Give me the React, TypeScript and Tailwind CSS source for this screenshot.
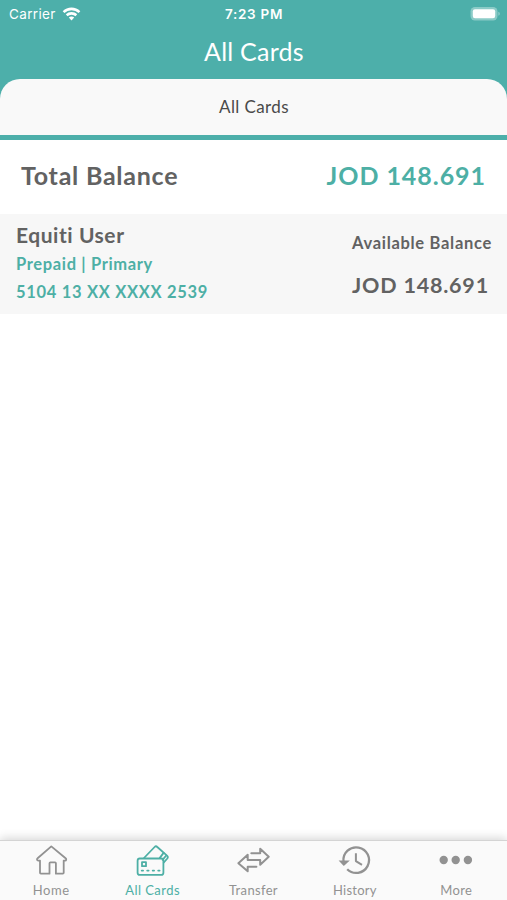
import type { ReactNode } from "react";

interface Card {
  holder: string;
  kind: string;
  number: string;
  balance: string;
}

interface Tab {
  label: string;
  icon: ReactNode;
  labelClass: string;
  active?: boolean;
}

const cards: Card[] = [
  {
    holder: "Equiti User",
    kind: "Prepaid | Primary",
    number: "5104 13 XX XXXX 2539",
    balance: "JOD 148.691",
  },
];

const iconProps = {
  width: 36,
  height: 36,
  viewBox: "0 0 36 36",
  fill: "none",
  stroke: "currentColor",
  strokeWidth: 1.8,
  strokeLinejoin: "round",
  strokeLinecap: "round",
} as const;

function HomeIcon() {
  return (
    <svg {...iconProps}>
      <path d="M18.3 3.4 32.6 15.3c1.1.9.7 2.3-.5 2.3h-1.4v12.2c0 .6-.3.9-.9.9h-6.9V20.3c0-.6-.3-.9-.9-.9h-4.6c-.6 0-.9.3-.9.9v10.4H7.9c-.6 0-.9-.3-.9-.9V17.6H5.2c-1.2 0-1.700-1.400-.6-2.300L18.3 3.4Z" />
    </svg>
  );
}

function CardsIcon() {
  return (
    <svg {...iconProps} strokeWidth={1.8}>
      <rect x="3.6" y="15.5" width="25.8" height="16.4" rx="2.2" />
      <path d="m10 15 10.6-11c.9-.9 1.8-.9 2.7 0l9.7 8.6c1 .9 1.1 1.9.3 2.9l-3.5 4" />
      <path d="m25.8 14.9 3.8-5M28.6 16.8l3.6-4.3" />
      <path d="M8 19.2h4v4H8zM7.7 27.6h1.400M13.2 27.6h1.4M18.7 27.6h1.4M24.2 27.6h1.4" />
    </svg>
  );
}

function TransferIcon() {
  return (
    <svg {...iconProps} strokeWidth={2}>
      <path d="M16.3 10.3h8.9V5.8l8.5 8-8.5 8v-4.7H12.7v-5.4l-9.3 8.5 9.3 8.1v-4.5h8.7" />
    </svg>
  );
}

function HistoryIcon() {
  return (
    <svg {...iconProps} strokeWidth={2.3} strokeLinecap="butt">
      <path d="M6.5 18.5A12.8 12.8 0 1 1 10.2 26.2" />
      <path d="M1.6 17.4h11.2L6.8 23z" fill="currentColor" stroke="none" />
      <path d="M18.9 10.3v7.8l6.1 3.8" strokeWidth="2" />
    </svg>
  );
}

function MoreIcon() {
  return (
    <svg {...iconProps} fill="currentColor" stroke="none">
      <circle cx="5.7" cy="17" r="4.2" />
      <circle cx="17.7" cy="17" r="4.2" />
      <circle cx="29.9" cy="17" r="4.2" />
    </svg>
  );
}

const tabs: Tab[] = [
  { label: "Home", icon: <HomeIcon />, labelClass: "pl-px tracking-[0.5px]" },
  { label: "All Cards", icon: <CardsIcon />, labelClass: "pl-px tracking-[0.45px]", active: true },
  { label: "Transfer", icon: <TransferIcon />, labelClass: "tracking-[0.35px]" },
  { label: "History", icon: <HistoryIcon />, labelClass: "tracking-[0.25px]" },
  { label: "More", icon: <MoreIcon />, labelClass: "tracking-[0.4px]" },
];

function StatusBar() {
  return (
    <div className="grid h-7 grid-cols-3 items-center pr-1.5 pl-[9px] font-['Inter',sans-serif] text-[13.5px] text-white">
      <div className="flex items-center gap-1.5">
        <span className="tracking-[0.35px]">Carrier</span>
        <svg width="19" height="15" viewBox="0 0 19 15" fill="currentColor">
          <path d="M9.5 .6c3.4 0 6.5 1.4 8.8 3.6l-1.7 1.9a10.2 10.2 0 0 0-14.2 0L.7 4.2A12.7 12.7 0 0 1 9.5 .6Z" />
          <path d="M9.5 5c2.2 0 4.2.9 5.7 2.3l-1.7 1.9a5.9 5.9 0 0 0-8 0L3.8 7.3A8.3 8.3 0 0 1 9.5 5Z" />
          <path d="M9.5 9.4c1 0 2 .4 2.7 1l-2.7 3.1-2.7-3.1c.7-.6 1.7-1 2.7-1Z" />
        </svg>
      </div>
      <span className="pr-0.5 text-center font-semibold tracking-[0.7px] whitespace-nowrap">7:23 PM</span>
      <svg className="justify-self-end" width="32" height="16" viewBox="0 0 32 16">
        <rect x="1.5" y="1" width="27" height="13.5" rx="4.5" fill="#fff" fillOpacity="0.35" />
        <rect x="3.8" y="3.2" width="22.4" height="9" rx="2.2" fill="#fff" />
        <path d="M29.5 5.8c1.5.6 1.5 3.4 0 4Z" fill="#fff" fillOpacity="0.5" />
      </svg>
    </div>
  );
}

function CardRow({ card }: { card: Card }) {
  return (
    <div className="flex h-[100px] justify-between bg-[#f7f7f7] pr-[15px] pl-4 font-bold">
      <div className="pt-[7px] whitespace-nowrap">
        <p className="text-[21px] leading-[27px] tracking-[0.55px]">{card.holder}</p>
        <p className="mt-[3px] text-[16.5px] leading-[26px] tracking-[0.65px] text-[#4dafa5]">{card.kind}</p>
        <p className="mt-0.5 text-[16.5px] leading-[27px] tracking-[0.7px] text-[#4dafa5]">{card.number}</p>
      </div>
      <div className="w-[140px] pt-4 whitespace-nowrap">
        <p className="text-[16.5px] leading-[26px] tracking-[0.7px]">Available Balance</p>
        <p className="mt-[15px] text-[21.5px] leading-[28px] tracking-[0.8px]">{card.balance}</p>
      </div>
    </div>
  );
}

function TabBar() {
  return (
    <nav className="grid h-[60px] grid-cols-5 border-t border-[#d4d4d4] bg-[#fafafa] shadow-[0_-2px_9px_rgba(0,0,0,0.16)]">
      {tabs.map((tab) => (
        <div
          key={tab.label}
          className={`flex flex-col items-center pt-0.5 ${tab.active ? "text-[#4dafa5]" : "text-[#929292]"}`}
        >
          {tab.icon}
          <span className={`mt-[3px] text-[13px] leading-[16px] whitespace-nowrap ${tab.labelClass}`}>{tab.label}</span>
        </div>
      ))}
    </nav>
  );
}

export default function App() {
  return (
    <div className="flex h-[900px] w-[507px] flex-col overflow-hidden bg-white font-['Lato',sans-serif] text-[#626262]">
      <header className="bg-[#4dafaa]">
        <StatusBar />
        <h1 className="h-[51px] pl-px text-center text-[25px] leading-[46px] tracking-[0.25px] text-white">All Cards</h1>
        <div className="h-14 rounded-t-[20px] bg-[#f9f9f9] pl-px text-center text-[17px] leading-[55px] tracking-[0.4px] text-[#4a4a4a]">
          All Cards
        </div>
        <div className="h-[5px]" />
      </header>

      <main className="flex-1">
        <div className="flex h-[74px] items-center justify-between pr-[21px] pb-[3px] pl-[21px] text-[25px] font-bold whitespace-nowrap">
          <span className="tracking-[0.75px]">Total Balance</span>
          <span className="tracking-[0.95px] text-[#4dafa5]">JOD 148.691</span>
        </div>
        {cards.map((card) => (
          <CardRow key={card.number} card={card} />
        ))}
      </main>

      <TabBar />
    </div>
  );
}
